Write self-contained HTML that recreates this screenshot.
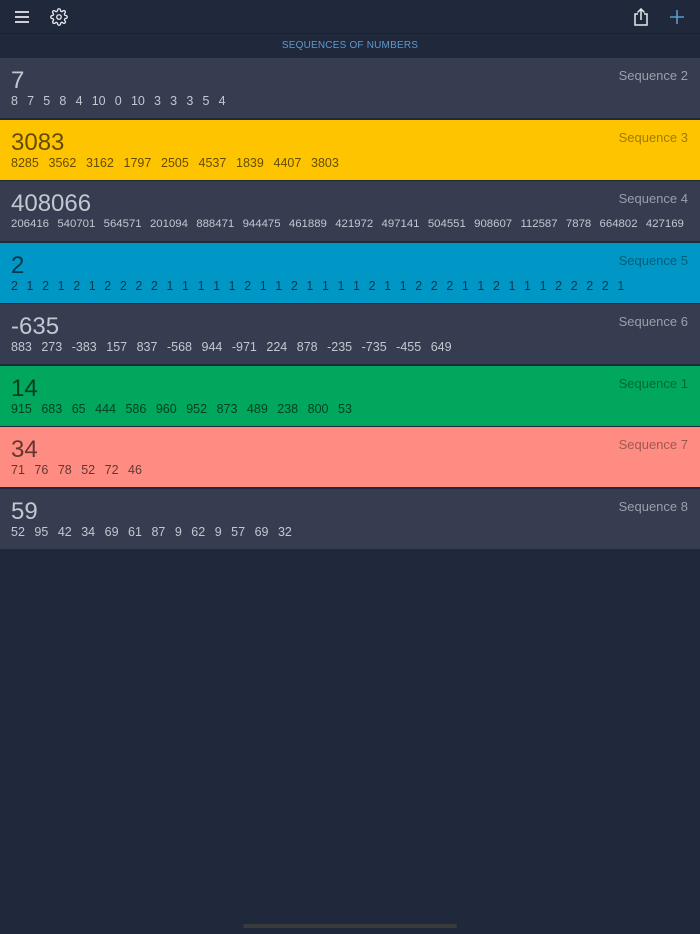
<!DOCTYPE html>
<html><head><meta charset="utf-8"><style>
*{margin:0;padding:0;box-sizing:border-box}
body{width:700px;height:934px;background:#20283c;font-family:"Liberation Sans",sans-serif;position:relative;overflow:hidden}
.top{height:34px;position:relative;border-bottom:1px solid #1a2133}
.title{height:23px;text-align:center;font-size:10px;color:#5a9ad0;line-height:23px;letter-spacing:0.2px}
.row{position:absolute;left:0;width:700px;height:60px;background:#363d51;color:#c3c7d0;overflow:hidden}
.row .big{position:absolute;left:11px;top:9px;font-size:24px;line-height:28px}
.row .lab{position:absolute;right:12px;top:10px;font-size:13px;color:#9a9fab}
.row .nums{position:absolute;left:11px;top:36px;font-size:12.5px;display:flex;gap:9.5px;white-space:nowrap}
.c{color:rgba(0,0,0,0.62)}
.c .lab{color:rgba(0,0,0,0.38)}
.home{position:absolute;left:243px;top:924px;width:214px;height:4px;border-radius:2px;background:#3a3b3d}
</style></head><body>
<div class="top">
<svg style="position:absolute;left:14px;top:10px" width="16" height="14" viewBox="0 0 16 14"><path d="M1 2h14M1 7h14M1 12h14" stroke="#e6e8ec" stroke-width="1.8"/></svg>
<svg style="position:absolute;left:50px;top:8px" width="18" height="18" viewBox="0 0 24 24" fill="none" stroke="#e6e8ec" stroke-width="1.8"><circle cx="12" cy="12" r="3"/><path d="M19.4 15a1.7 1.7 0 0 0 .3 1.8l.1.1a2 2 0 1 1-2.8 2.8l-.1-.1a1.7 1.7 0 0 0-1.8-.3 1.7 1.7 0 0 0-1 1.5V21a2 2 0 1 1-4 0v-.1a1.7 1.7 0 0 0-1.100-1.500 1.7 1.7 0 0 0-1.8.3l-.1.1a2 2 0 1 1-2.8-2.8l.1-.1a1.7 1.7 0 0 0 .3-1.8 1.7 1.7 0 0 0-1.5-1H3a2 2 0 1 1 0-4h.1a1.7 1.7 0 0 0 1.5-1.1 1.7 1.7 0 0 0-.3-1.8l-.1-.1a2 2 0 1 1 2.8-2.8l.1.1a1.7 1.7 0 0 0 1.8.3H9a1.7 1.7 0 0 0 1-1.5V3a2 2 0 1 1 4 0v.1a1.7 1.7 0 0 0 1 1.5 1.7 1.7 0 0 0 1.8-.3l.1-.1a2 2 0 1 1 2.8 2.8l-.1.1a1.7 1.7 0 0 0-.3 1.8V9a1.7 1.7 0 0 0 1.5 1H21a2 2 0 1 1 0 4h-.1a1.7 1.7 0 0 0-1.5 1z"/></svg>
<svg style="position:absolute;left:633px;top:8px" width="16" height="18" viewBox="0 0 16 18" fill="none" stroke="#e6e8ec" stroke-width="1.5"><path d="M5 6H2v11h12V6h-3M8 12V1M4.5 4.5L8 1l3.5 3.5"/></svg>
<svg style="position:absolute;left:670px;top:10px" width="14" height="14" viewBox="0 0 14 14"><path d="M7 0v14M0 7h14" stroke="#5a9ad0" stroke-width="1.6"/></svg>
</div>
<div class="title">SEQUENCES OF NUMBERS</div>

<div class="row" style="top:58px"><div class="big">7</div><div class="lab">Sequence 2</div><div class="nums" style="gap:9.2px"><span>8</span><span>7</span><span>5</span><span>8</span><span>4</span><span>10</span><span>0</span><span>10</span><span>3</span><span>3</span><span>3</span><span>5</span><span>4</span></div></div>
<div class="row c" style="top:120px;background:#ffc400"><div class="big">3083</div><div class="lab">Sequence 3</div><div class="nums" style="gap:9.7px"><span>8285</span><span>3562</span><span>3162</span><span>1797</span><span>2505</span><span>4537</span><span>1839</span><span>4407</span><span>3803</span></div></div>
<div class="row" style="top:181px"><div class="big">408066</div><div class="lab">Sequence 4</div><div class="nums" style="gap:8.3px;font-size:11.4px;top:37px"><span>206416</span><span>540701</span><span>564571</span><span>201094</span><span>888471</span><span>944475</span><span>461889</span><span>421972</span><span>497141</span><span>504551</span><span>908607</span><span>112587</span><span>7878</span><span>664802</span><span>427169</span></div></div>
<div class="row c" style="top:243px;background:#0096c5"><div class="big">2</div><div class="lab">Sequence 5</div><div class="nums" style="gap:8.6px"><span>2</span><span>1</span><span>2</span><span>1</span><span>2</span><span>1</span><span>2</span><span>2</span><span>2</span><span>2</span><span>1</span><span>1</span><span>1</span><span>1</span><span>1</span><span>2</span><span>1</span><span>1</span><span>2</span><span>1</span><span>1</span><span>1</span><span>1</span><span>2</span><span>1</span><span>1</span><span>2</span><span>2</span><span>2</span><span>1</span><span>1</span><span>2</span><span>1</span><span>1</span><span>1</span><span>2</span><span>2</span><span>2</span><span>2</span><span>1</span></div></div>
<div class="row" style="top:304px"><div class="big">-635</div><div class="lab">Sequence 6</div><div class="nums"><span>883</span><span>273</span><span>-383</span><span>157</span><span>837</span><span>-568</span><span>944</span><span>-971</span><span>224</span><span>878</span><span>-235</span><span>-735</span><span>-455</span><span>649</span></div></div>
<div class="row c" style="top:366px;background:#00a75c"><div class="big">14</div><div class="lab">Sequence 1</div><div class="nums"><span>915</span><span>683</span><span>65</span><span>444</span><span>586</span><span>960</span><span>952</span><span>873</span><span>489</span><span>238</span><span>800</span><span>53</span></div></div>
<div class="row c" style="top:427px;background:#ff8c82"><div class="big">34</div><div class="lab">Sequence 7</div><div class="nums"><span>71</span><span>76</span><span>78</span><span>52</span><span>72</span><span>46</span></div></div>
<div class="row" style="top:489px"><div class="big">59</div><div class="lab">Sequence 8</div><div class="nums"><span>52</span><span>95</span><span>42</span><span>34</span><span>69</span><span>61</span><span>87</span><span>9</span><span>62</span><span>9</span><span>57</span><span>69</span><span>32</span></div></div>
<div class="home"></div>
</body></html>
